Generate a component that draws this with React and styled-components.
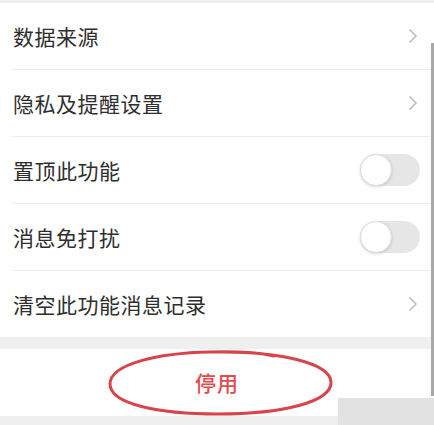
import React, { useState } from "react";
import styled, { createGlobalStyle } from "styled-components";

const GlobalStyle = createGlobalStyle`
  html, body {
    margin: 0;
    padding: 0;
    background: #efefef;
    font-family: "Noto Sans CJK SC", "Noto Sans", sans-serif;
  }
`;

const Page = styled.div`
  position: relative;
  width: 434px;
  height: 425px;
  overflow: hidden;
  background: #efefef;
  padding-top: 3px;
  box-sizing: border-box;
`;

const Group = styled.div`
  background: #fff;
  padding-left: 12px;
`;

const Row = styled.div`
  display: flex;
  align-items: center;
  justify-content: space-between;
  height: 66px;
  padding-right: 14px;
  border-bottom: ${(props) => (props.last ? "none" : "1px solid #ececec")};
`;

const Label = styled.span`
  font-size: 21px;
  letter-spacing: 0.5px;
  color: #2e2e2e;
  padding-left: 1px;
`;

const Chevron = styled.svg`
  width: 10px;
  height: 16px;
  margin-right: 2px;
`;

const Track = styled.button`
  position: relative;
  width: 60px;
  height: 32px;
  border: none;
  border-radius: 16px;
  background: ${(props) => (props.on ? "#4cd964" : "#e6e6e6")};
  padding: 0;
  margin-right: 0;
  cursor: pointer;
`;

const Knob = styled.span`
  position: absolute;
  top: 0;
  left: ${(props) => (props.on ? "28px" : "0")};
  width: 32px;
  height: 32px;
  border-radius: 50%;
  background: #fff;
  box-sizing: border-box;
  border: 1px solid #dedede;
  box-shadow: 0 1px 3px rgba(0, 0, 0, 0.16);
`;

const Gap = styled.div`
  height: 12px;
`;

const Action = styled.div`
  position: relative;
  height: 67px;
  background: #fff;
  display: flex;
  align-items: center;
  justify-content: center;
`;

const StopText = styled.span`
  font-size: 21px;
  font-weight: 500;
  color: #e24a4f;
  letter-spacing: 1px;
  margin-top: -2px;
`;

const Mark = styled.svg`
  position: absolute;
  left: 106px;
  top: -1px;
  width: 230px;
  height: 70px;
  pointer-events: none;
`;

const Scrollbar = styled.div`
  position: absolute;
  right: 0;
  top: 43px;
  width: 3px;
  height: 353px;
  background: #a8a8a8;
`;

const Watermark = styled.div`
  position: absolute;
  right: 0;
  bottom: 0;
  width: 96px;
  height: 27px;
  background: #e2e2e2;
`;

function Arrow() {
  return (
    <Chevron viewBox="0 0 10 16">
      <path d="M1.5 1.5 L8 8 L1.5 14.5" fill="none" stroke="#bdbdbd" strokeWidth="1.6" />
    </Chevron>
  );
}

function Switch({ on, onToggle }) {
  return (
    <Track on={on} onClick={onToggle}>
      <Knob on={on} />
    </Track>
  );
}

export default function App() {
  const [pin, setPin] = useState(false);
  const [mute, setMute] = useState(false);

  return (
    <Page>
      <GlobalStyle />
      <Group>
        <Row>
          <Label>数据来源</Label>
          <Arrow />
        </Row>
        <Row>
          <Label>隐私及提醒设置</Label>
          <Arrow />
        </Row>
        <Row>
          <Label>置顶此功能</Label>
          <Switch on={pin} onToggle={() => setPin(!pin)} />
        </Row>
        <Row>
          <Label>消息免打扰</Label>
          <Switch on={mute} onToggle={() => setMute(!mute)} />
        </Row>
        <Row last>
          <Label>清空此功能消息记录</Label>
          <Arrow />
        </Row>
      </Group>
      <Gap />
      <Action>
        <StopText>停用</StopText>
        <Mark viewBox="0 0 230 70">
          <path
            d="M118 4 C170 4 224 14 225 34 C226 54 176 66 112 66 C52 66 4 56 4 36 C4 16 52 5 104 4 C120 3.6 150 4 168 8"
            fill="none"
            stroke="#d8444a"
            strokeWidth="3"
            strokeLinecap="round"
          />
        </Mark>
      </Action>
      <Scrollbar />
      <Watermark />
    </Page>
  );
}
